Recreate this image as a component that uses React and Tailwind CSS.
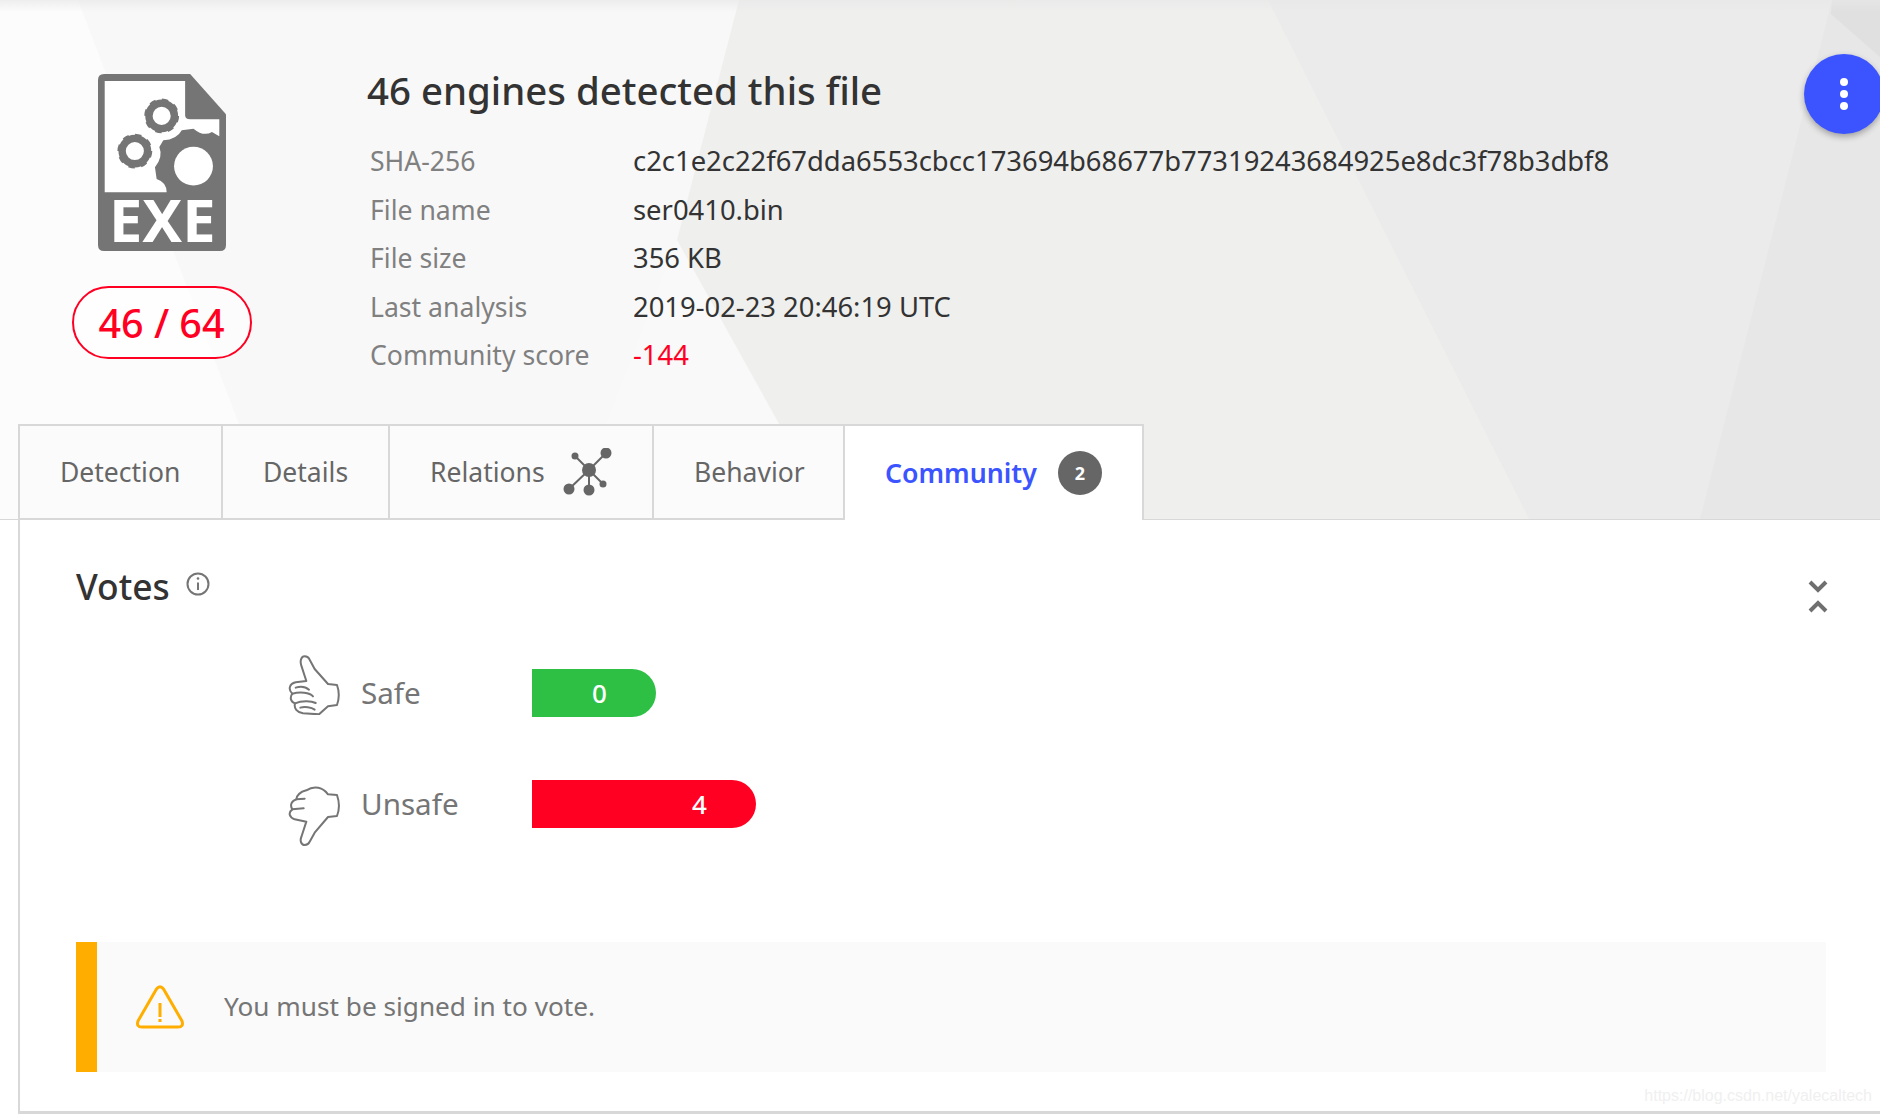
const tabs = [
  { label: 'Detection', width: 'w-[203px]', pad: 'pl-[40px]' },
  { label: 'Details', width: 'w-[167px]', pad: 'pl-[40px]' },
  { label: 'Relations', width: 'w-[264px]', pad: 'pl-[40px]', icon: true },
  { label: 'Behavior', width: 'w-[191px]', pad: 'pl-[40px]' },
]

const rows = [
  ['SHA-256', 'c2c1e2c22f67dda6553cbcc173694b68677b77319243684925e8dc3f78b3dbf8'],
  ['File name', 'ser0410.bin'],
  ['File size', '356 KB'],
  ['Last analysis', '2019-02-23 20:46:19 UTC'],
  ['Community score', '-144'],
]

export default function App() {
  return (
    <div className="relative w-[1880px] h-[1114px] overflow-hidden bg-white text-[#666] font-['Noto_Sans','Open_Sans',sans-serif]">
      <header className="relative h-[520px] border-b-2 border-[#d8d8d8] bg-[#f8f8f8]">
        <HeaderBackground />
        <div className="absolute inset-x-0 top-0 h-3 bg-gradient-to-b from-[#e8e8e8]/70 to-transparent" />

        <div className="relative flex pt-[74px]">
          <div className="w-[367px] flex flex-col items-center pr-[44px]">
            <ExeIcon />
            <div className="mt-[23px] w-[180px] h-[73px] pt-[2px] rounded-full border-2 border-[#ff0022] flex items-center justify-center text-[39.5px] leading-none text-[#ff0022] font-medium bg-white/60">
              46 / 64
            </div>
          </div>

          <div className="-mt-[9px]">
            <h1 className="text-[38.4px] leading-[50px] font-medium text-[#333]">46 engines detected this file</h1>
            <dl className="mt-[22px] pl-[3px]">
              {rows.map(([name, value]) => (
                <div key={name} className="flex h-[48.5px] items-baseline leading-[48.5px]">
                  <dt className="w-[263px] text-[26.6px] text-[#808080]">{name}</dt>
                  <dd className={`text-[27.4px] ${name === 'Community score' ? 'text-[#ff0022]' : 'text-[#333]'}`}>{value}</dd>
                </div>
              ))}
            </dl>
          </div>
        </div>

        <button className="absolute left-[1804px] top-[54px] w-[80px] h-[80px] rounded-full bg-[#3b54ff] shadow-[0_3px_6px_rgba(0,0,0,0.3)] flex flex-col items-center justify-center gap-[4px]">
          <span className="w-2 h-2 rounded-full bg-white" />
          <span className="w-2 h-2 rounded-full bg-white" />
          <span className="w-2 h-2 rounded-full bg-white" />
        </button>

        <nav className="absolute left-[18px] top-[424px] flex h-[96px]">
          {tabs.map(tab => (
            <div
              key={tab.label}
              className={`${tab.width} ${tab.pad} flex items-center pt-[2px] border-2 border-r-0 border-[#d8d8d8] bg-[#fbfbfb] text-[26.5px] text-[#666]`}
            >
              <span>{tab.label}</span>
              {tab.icon && <RelationsIcon />}
            </div>
          ))}
          <div className="w-[301px] h-[96px] pl-[40px] flex items-center border-2 border-b-0 border-[#d8d8d8] bg-white text-[26.7px] font-semibold text-[#3b54ff]">
            <span>Community</span>
            <span className="ml-[21px] w-[44px] h-[44px] rounded-full bg-[#666] text-white text-[18px] font-bold flex items-center justify-center">2</span>
          </div>
        </nav>
      </header>

      <main className="h-[594px] border-l-2 border-b-[3px] border-[#d8d8d8] ml-[18px] pl-[56px] pr-[54px] relative">
        <div className="flex items-center justify-between h-[91px] pt-[41px]">
          <div className="flex items-center gap-[16px]">
            <h2 className="text-[35.4px] leading-[50px] font-medium text-[#333]">Votes</h2>
            <InfoIcon />
          </div>
          <CollapseIcon />
        </div>

        <div className="mt-[58px] pl-[212px]">
          <VoteRow label="Safe" value="0" Icon={ThumbUp} iconClass="-mt-[16px]" barClass="w-[124px] bg-[#2dc045]" textClass="pl-[60px]" />
          <VoteRow label="Unsafe" value="4" Icon={ThumbDown} iconClass="mt-[24px]" barClass="w-[224px] bg-[#ff0022]" textClass="pl-[160px]" rowClass="mt-[63px]" />
        </div>

        <div className="mt-[114px] h-[130px] flex items-center bg-[#fafafa] border-l-[21px] border-[#ffae00] pl-[39px]">
          <WarningIcon />
          <p className="ml-[40px] text-[26.2px] text-[#757575]">You must be signed in to vote.</p>
        </div>

        <span className="absolute right-[8px] bottom-[3px] text-[16px] font-['Liberation_Sans',sans-serif] text-[#f0f0f0]">
          https://blog.csdn.net/yalecaltech
        </span>
      </main>
    </div>
  )
}

function VoteRow({ label, value, Icon, iconClass, barClass, textClass, rowClass = '' }) {
  return (
    <div className={`flex items-center h-[48px] ${rowClass}`}>
      <div className={`w-[52px] flex justify-center ${iconClass}`}><Icon /></div>
      <span className="ml-[21px] w-[171px] text-[29.6px] text-[#757575]">{label}</span>
      <div className={`${barClass} ${textClass} h-[48px] rounded-r-full flex items-center text-[26px] font-medium text-white`}>
        {value}
      </div>
    </div>
  )
}

function HeaderBackground() {
  return (
    <svg className="absolute inset-0" width="1880" height="519" viewBox="0 0 1880 519">
      <polygon points="0,0 78,0 275,519 0,519" fill="#fcfcfc" />
      <polygon points="677,240 830,519 570,519" fill="#f9f9f9" />
      <polygon points="739,0 1880,0 1880,519 832,519 677,240" fill="#efefee" />
      <polygon points="1268,0 1880,0 1880,519 1529,519" fill="#ebebeb" />
      <polygon points="1832,0 1880,0 1880,519 1700,519" fill="#e7e7e7" />
      <polygon points="1831,14 1832,0 1880,0 1880,57" fill="#e0e0e0" />
    </svg>
  )
}

function ExeIcon() {
  return (
    <svg width="128" height="189" viewBox="295 222 382 564">
      <path d="M295 240 Q295 222 313 222 H570 L677 342 V732 Q677 750 659 750 H313 Q295 750 295 732 Z" fill="#757575" />
      <path d="M315 243 H555 V345 Q555 357 570 357 H657 V408 L635 395 Q610 410 580 385 L545 390 Q530 418 490 420 L478 440 Q490 470 465 500 L470 535 Q500 545 500 575 H315 Z" fill="#fff" />
      <circle cx="485" cy="347" r="38" fill="none" stroke="#757575" strokeWidth="22" />
      <circle cx="485" cy="347" r="46" fill="none" stroke="#757575" strokeWidth="12" strokeDasharray="18 18" />
      <circle cx="405" cy="452" r="38" fill="none" stroke="#757575" strokeWidth="22" />
      <circle cx="405" cy="452" r="46" fill="none" stroke="#757575" strokeWidth="12" strokeDasharray="18 18" />
      <circle cx="580" cy="497" r="58" fill="#fff" />
      <text x="487" y="722" textAnchor="middle" fontSize="178" fontWeight="700" fontFamily="Noto Sans, sans-serif" fill="#fff">EXE</text>
    </svg>
  )
}

function RelationsIcon() {
  return (
    <svg className="ml-[18px] -mt-[2px]" width="50" height="48" viewBox="563 448 50 48" fill="#666">
      <g stroke="#666" strokeWidth="2">
        <line x1="589" y1="470" x2="606" y2="453" />
        <line x1="589" y1="470" x2="575" y2="456" />
        <line x1="589" y1="470" x2="569" y2="489" />
        <line x1="589" y1="470" x2="589" y2="490" />
        <line x1="589" y1="470" x2="603" y2="484" />
      </g>
      <circle cx="589" cy="470" r="7" />
      <circle cx="606" cy="453" r="5.5" />
      <circle cx="575" cy="456" r="3.5" />
      <circle cx="569" cy="489" r="5.5" />
      <circle cx="589" cy="490" r="5.5" />
      <circle cx="603" cy="484" r="3.5" />
    </svg>
  )
}

function InfoIcon() {
  return (
    <svg className="-mt-[4px]" width="24" height="24" viewBox="0 0 24 24" fill="none" stroke="#757575" strokeWidth="2">
      <circle cx="12" cy="12" r="10.5" />
      <line x1="12" y1="10.5" x2="12" y2="18" />
      <circle cx="12" cy="6.5" r="1.3" fill="#757575" stroke="none" />
    </svg>
  )
}

function CollapseIcon() {
  return (
    <svg className="mt-[22px] -mr-[2px]" width="20" height="36" viewBox="0 0 20 36" fill="none" stroke="#6f6f6f" strokeWidth="4">
      <polyline points="2,3 10,11 18,3" />
      <polyline points="2,32 10,24 18,32" />
    </svg>
  )
}

function ThumbUp() {
  return (
    <svg width="52" height="60" viewBox="85 68 156 180" fill="none" stroke="#757575" strokeWidth="6" strokeLinejoin="round" strokeLinecap="round">
      <path d="M135 72 C125 72 120 85 125 100 L140 146 L108 150 C88 155 85 172 98 184 C90 195 92 208 106 213 C102 228 112 240 130 243 L178 246 L205 222 L232 218 C240 195 240 180 232 158 L205 155 L165 110 L150 82 C147 75 142 72 135 72 Z" />
      <path d="M108 166 C125 160 140 165 148 172 M98 184 C120 178 150 180 160 192 M106 213 C125 205 155 205 168 212 M122 226 C135 222 155 225 165 232" />
    </svg>
  )
}

function ThumbDown() {
  return (
    <svg width="52" height="60" viewBox="85 465 156 180" fill="none" stroke="#757575" strokeWidth="6" strokeLinejoin="round" strokeLinecap="round">
      <path d="M135 642 C125 642 120 630 125 618 L140 572 L105 565 C88 558 85 545 98 535 C90 522 95 510 110 505 C112 490 125 482 140 478 C165 462 190 470 205 490 L232 492 C240 515 240 535 232 555 L205 558 L165 605 L150 632 C147 640 142 642 135 642 Z" />
      <path d="M98 535 L132 532 M110 505 L135 503" />
    </svg>
  )
}

function WarningIcon() {
  return (
    <svg width="48" height="44" viewBox="0 0 48 44" fill="none" stroke="#ffae00" strokeWidth="3">
      <path d="M20.5 4 Q24 -0.5 27.5 4 L46 36 Q48 42 42 42 H6 Q0 42 2 36 Z" strokeLinejoin="round" />
      <line x1="24" y1="18" x2="24" y2="32" />
      <line x1="24" y1="34" x2="24" y2="37" />
    </svg>
  )
}
